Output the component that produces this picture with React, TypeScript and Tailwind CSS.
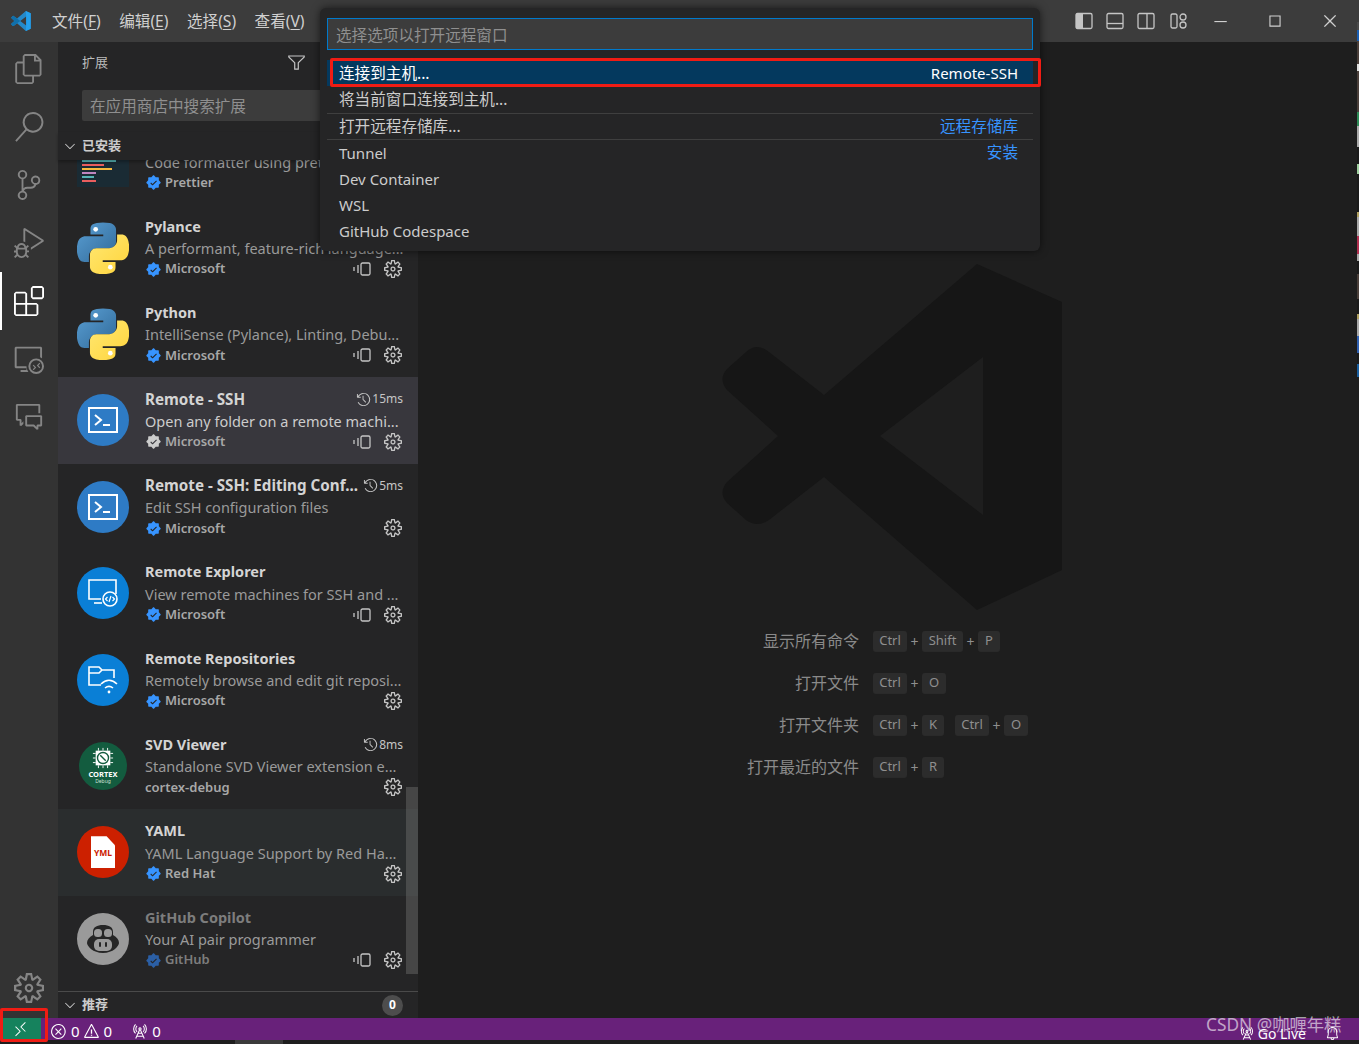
import type { ReactNode } from "react";
import {
  VscBell,
  VscChromeClose,
  VscChromeMaximize,
  VscChromeMinimize,
  VscChevronDown,
  VscCommentDiscussion,
  VscDebugAlt,
  VscError,
  VscExtensions,
  VscFiles,
  VscFilter,
  VscHistory,
  VscRadioTower,
  VscRemote,
  VscRemoteExplorer,
  VscSearch,
  VscSettingsGear,
  VscSourceControl,
  VscVerifiedFilled,
  VscWarning,
} from "react-icons/vsc";

const font = { fontFamily: '"Noto Sans", "Noto Sans CJK SC", sans-serif' };

const logoPath =
  "M255 2 L340 40 V308 L255 348 L102 215 L47 258 Q35 266 24 258 L5 241 Q-4 231 5 220 L56 174 L5 128 Q-4 117 5 107 L24 90 Q35 80 47 90 L102 133 L255 2 Z M261 95 L158 174 L261 253 Z";

function VsLogo({ className, fill }: { className: string; fill: string }) {
  return (
    <svg viewBox="0 0 341 349" className={className}>
      <path d={logoPath} fill={fill} fillRule="evenodd" />
    </svg>
  );
}

function TitleLogo() {
  return (
    <svg viewBox="0 0 341 349" className="h-[20px] w-[20px] shrink-0">
      <path d={logoPath} fill="#2489ca" fillRule="evenodd" />
      <path d="M255 2 L340 40 V308 L255 348 L261 253 V95 Z" fill="#24a0ed" />
      <path d="M5 128 L56 174 L5 220 Q-4 231 5 241 L24 258 Q35 266 47 258 L102 215 L158 174 L102 133 L47 90 Q35 80 24 90 L5 107 Q-4 117 5 128 Z" fill="#1070ab" />
    </svg>
  );
}

function PythonLogo() {
  const d =
    "M54.9 1C50.3 1 45.9 1.4 42 2.1 30.5 4.1 28.5 8.4 28.5 16.2V26.5H55.6V30H18.3C10.5 30 3.6 34.7 1.5 43.7-1 54-1.1 60.4 1.5 71.1 3.4 79.1 8 84.8 15.9 84.8H25.2V72.4C25.2 63.5 32.9 55.6 42 55.6H69.1C76.6 55.6 82.6 49.4 82.6 41.9V16.2C82.6 8.9 76.4 3.4 69.1 2.2 64.4 1.4 59.6 1 54.9 1Z";
  return (
    <svg viewBox="0 0 110 110" className="h-[52px] w-[52px]">
      <defs>
        <linearGradient id="py-blue" x1="0" y1="0" x2="1" y2="1">
          <stop offset="0" stopColor="#5a9fd4" />
          <stop offset="1" stopColor="#306998" />
        </linearGradient>
        <linearGradient id="py-yellow" x1="0" y1="0" x2="1" y2="1">
          <stop offset="0" stopColor="#ffd43b" />
          <stop offset="1" stopColor="#ffe873" />
        </linearGradient>
      </defs>
      <path d={d} fill="url(#py-blue)" />
      <circle cx="39.5" cy="15.5" r="5" fill="#fff" />
      <g transform="rotate(180 55 55.5)">
        <path d={d} fill="url(#py-yellow)" />
        <circle cx="39.5" cy="15.5" r="5" fill="#fff" />
      </g>
    </svg>
  );
}

function TerminalIcon() {
  return (
    <div className="flex h-[52px] w-[52px] items-center justify-center rounded-full bg-[#2e7bc5]">
      <svg viewBox="0 0 30 26" className="h-[26px] w-[30px]" fill="none" stroke="#fff">
        <rect x="1" y="1" width="28" height="24" strokeWidth="2" />
        <path d="M7 8l6 5-6 5" strokeWidth="2" />
        <path d="M15 18h7" strokeWidth="2" />
      </svg>
    </div>
  );
}

function ExplorerIcon() {
  return (
    <div className="flex h-[52px] w-[52px] items-center justify-center rounded-full bg-[#0a7fd6]">
      <svg viewBox="0 0 32 30" className="h-[30px] w-[32px]" fill="none" stroke="#fff" strokeWidth="1.6">
        <path d="M14 21H2V2h27v14" />
        <path d="M7 25h8" />
        <circle cx="23" cy="21" r="7" fill="#0a7fd6" />
        <path d="M20.5 19l-2 2 2 2M25.5 19l2 2-2 2M24 18l-2 6" strokeWidth="1.2" />
      </svg>
    </div>
  );
}

function ReposIcon() {
  return (
    <div className="flex h-[52px] w-[52px] items-center justify-center rounded-full bg-[#0a7fd6]">
      <svg viewBox="0 0 32 30" className="h-[30px] w-[32px]" fill="none" stroke="#fff" strokeWidth="1.6">
        <path d="M14 20H2V2h10l3 3h12v8" />
        <path d="M2 8h10l3-3" />
        <path d="M14 19c5-5 11-5 16 0M18 23c3-2.500 5-2.500 8 0" />
        <circle cx="22" cy="27" r="1.400" fill="#fff" stroke="none" />
      </svg>
    </div>
  );
}

function CortexIcon() {
  return (
    <div className="flex h-[48px] w-[48px] flex-col items-center rounded-full bg-[#135c3f] pt-[5px] text-white">
      <svg viewBox="0 0 24 24" className="h-[22px] w-[22px]" fill="none" stroke="#fff">
        <rect x="4" y="4" width="16" height="16" fill="#fff" stroke="none" />
        <circle cx="12" cy="12" r="6" stroke="#135c3f" strokeWidth="1.500" />
        <path d="M9 9l6 6" stroke="#135c3f" strokeWidth="1.500" />
        <path d="M7 1v3M12 1v3M17 1v3M7 20v3M12 20v3M17 20v3M1 7h3M1 12h3M1 17h3M20 7h3M20 12h3M20 17h3" strokeWidth="1" />
      </svg>
      <div className="mt-[1px] text-[7.500px] font-bold leading-[8px]">CORTEX</div>
      <div className="text-[5px] leading-[6px] text-[#cfe3da]">Debug</div>
    </div>
  );
}

function YamlIcon() {
  return (
    <div className="flex h-[52px] w-[52px] items-center justify-center rounded-full bg-[#cc2000]">
      <div className="flex h-[32px] w-[24px] items-center justify-center bg-white pt-[2px] [clip-path:polygon(0_0,65%_0,100%_28%,100%_100%,0_100%)]">
        <span className="text-[8.500px] font-bold text-[#cc2000]">YML</span>
      </div>
    </div>
  );
}

function CopilotIcon() {
  return (
    <div className="flex h-[52px] w-[52px] items-center justify-center rounded-full bg-[#9a9a9a]">
      <svg viewBox="0 0 36 30" className="h-[30px] w-[36px]">
        <path d="M8 8c0-5 4-7 10-7s10 2 10 7v3c4 2 6 5 6 8 0 3-6 10-16 10S2 22 2 19c0-3 2-6 6-8z" fill="#262626" />
        <rect x="9" y="5" width="8" height="8" rx="3.500" fill="#9a9a9a" />
        <rect x="19" y="5" width="8" height="8" rx="3.500" fill="#9a9a9a" />
        <rect x="9" y="15" width="18" height="12" rx="5" fill="#9a9a9a" />
        <rect x="14" y="18" width="2" height="5" rx="1" fill="#262626" />
        <rect x="20" y="18" width="2" height="5" rx="1" fill="#262626" />
      </svg>
    </div>
  );
}

function DeviceIcon() {
  return (
    <svg viewBox="0 0 18 14" className="h-[14px] w-[18px]" fill="none" stroke="#c5c5c5" strokeWidth="1.300">
      <rect x="8" y="1" width="9" height="12" rx="1.500" />
      <path d="M5 3v8M1 5v4" />
    </svg>
  );
}

type Ext = {
  name: string;
  desc: string;
  publisher: string;
  icon: ReactNode;
  time?: string;
  device?: boolean;
  verified?: boolean;
  rowClass?: string;
  dim?: boolean;
  selected?: boolean;
  wide?: boolean;
};

const extensions: Ext[] = [
  {
    name: "Prettier - Code formatter",
    desc: "Code formatter using prettier",
    publisher: "Prettier",
    icon: (
      <div className="flex h-[52px] w-[52px] flex-col justify-end gap-[2px] bg-[#1a2b34] px-[5px] pb-[5px]">
        <div className="h-[2px] w-[34px] bg-[#56b3b4]" />
        <div className="h-[2px] w-[22px] bg-[#ea5e5e]" />
        <div className="h-[2px] w-[30px] bg-[#f7b93e]" />
        <div className="h-[2px] w-[14px] bg-[#bf85bf]" />
        <div className="h-[2px] w-[12px] bg-[#56b3b4]" />
        <div className="h-[2px] w-[14px] bg-[#ea5e5e]" />
      </div>
    ),
    verified: true,
  },
  { name: "Pylance", desc: "A performant, feature-rich language...", publisher: "Microsoft", icon: <PythonLogo />, device: true, verified: true },
  { name: "Python", desc: "IntelliSense (Pylance), Linting, Debu...", publisher: "Microsoft", icon: <PythonLogo />, device: true, verified: true },
  { name: "Remote - SSH", desc: "Open any folder on a remote machi...", publisher: "Microsoft", icon: <TerminalIcon />, time: "15ms", device: true, verified: true, rowClass: "bg-[#38373d]", selected: true, wide: true },
  { name: "Remote - SSH: Editing Conf...", desc: "Edit SSH configuration files", publisher: "Microsoft", icon: <TerminalIcon />, time: "5ms", verified: true, wide: true },
  { name: "Remote Explorer", desc: "View remote machines for SSH and ...", publisher: "Microsoft", icon: <ExplorerIcon />, device: true, verified: true },
  { name: "Remote Repositories", desc: "Remotely browse and edit git reposi...", publisher: "Microsoft", icon: <ReposIcon />, verified: true },
  { name: "SVD Viewer", desc: "Standalone SVD Viewer extension e...", publisher: "cortex-debug", icon: <CortexIcon />, time: "8ms" },
  { name: "YAML", desc: "YAML Language Support by Red Ha...", publisher: "Red Hat", icon: <YamlIcon />, verified: true, rowClass: "bg-[#2a2d2e]" },
  { name: "GitHub Copilot", desc: "Your AI pair programmer", publisher: "GitHub", icon: <CopilotIcon />, device: true, verified: true, dim: true },
];

function ExtensionRow({ ext }: { ext: Ext }) {
  return (
    <div className={`flex h-[86.4px] items-center pl-[19px] pr-[15px] ${ext.rowClass ?? ""}`}>
      <div className="flex w-[52px] shrink-0 justify-center">{ext.icon}</div>
      <div className="ml-[16px] flex min-w-0 flex-1 flex-col">
        <div className="flex h-[21px] items-center justify-between whitespace-nowrap">
          <span className={`font-bold ${ext.wide ? "text-[15.2px]" : "text-[14.5px]"} ${ext.dim ? "text-[#7d7d7d]" : "text-[#d4d4d4]"}`}>{ext.name}</span>
          {ext.time && (
            <span className="flex items-center gap-[1px] text-[12px] text-[#c5c5c5]">
              <VscHistory className="h-[15px] w-[15px]" />
              {ext.time}
            </span>
          )}
        </div>
        <div className={`h-[22px] whitespace-nowrap text-[14.5px] leading-[22px] ${ext.selected ? "text-[#cccccc]" : "text-[#9a9a9a]"}`}>{ext.desc}</div>
        <div className="flex h-[20px] items-center justify-between">
          <span className="flex items-center gap-[3px]">
            {ext.verified && (
              <VscVerifiedFilled className={`h-[17px] w-[17px] ${ext.selected ? "text-[#cccccc]" : ext.dim ? "text-[#2b5fa5]" : "text-[#3794ff]"}`} />
            )}
            <span className={`text-[13px] font-semibold ${ext.dim ? "text-[#7d7d7d]" : "text-[#a8a8a8]"}`}>{ext.publisher}</span>
          </span>
          <span className="mr-[1px] flex items-center gap-[13px]">
            {ext.device && <DeviceIcon />}
            <VscSettingsGear className="h-[18px] w-[18px] text-[#c5c5c5]" />
          </span>
        </div>
      </div>
    </div>
  );
}

function MenuItem({ label, hot }: { label: string; hot: string }) {
  return (
    <span className="whitespace-nowrap">
      {label}(<span className="underline underline-offset-2">{hot}</span>)
    </span>
  );
}

function ActivityIcon({ children, active }: { children: ReactNode; active?: boolean }) {
  return (
    <div className={`flex h-[58px] w-full items-center justify-center border-l-2 pr-[2px] ${active ? "border-white text-white" : "border-transparent text-[#858585]"}`}>
      {children}
    </div>
  );
}

function keyWidth(k: string) {
  if (k === "Shift") return "min-w-[41px]";
  if (k === "Ctrl") return "min-w-[34px]";
  if (k === "O") return "min-w-[24px]";
  return "min-w-[22px]";
}

function Key({ label }: { label: string }) {
  return (
    <span className={`flex h-[21px] items-center justify-center rounded-[3px] border-b border-b-[#2a2a2a] bg-[#2c2c2c] text-[13px] text-[#8f8f8f] ${keyWidth(label)}`}>
      {label}
    </span>
  );
}

function Combo({ keys }: { keys: string[] }) {
  return (
    <span className="flex items-center">
      {keys.map((k, i) => (
        <span key={k} className="flex items-center">
          {i > 0 && <span className="w-[15px] text-center text-[14px] text-[#8f8f8f]">+</span>}
          <Key label={k} />
        </span>
      ))}
    </span>
  );
}

const shortcuts = [
  { label: "显示所有命令", combos: [["Ctrl", "Shift", "P"]] },
  { label: "打开文件", combos: [["Ctrl", "O"]] },
  { label: "打开文件夹", combos: [["Ctrl", "K"], ["Ctrl", "O"]] },
  { label: "打开最近的文件", combos: [["Ctrl", "R"]] },
];

function LayoutIcon({ kind }: { kind: "left" | "bottom" | "split" | "grid" }) {
  return (
    <svg viewBox="0 0 18 18" className={`h-[18px] w-[18px] ${kind === "grid" ? "ml-[2px]" : ""}`} fill="none" stroke="#c5c5c5" strokeWidth="1.300">
      {kind === "grid" ? (
        <>
          <rect x="1" y="2" width="6" height="14" rx="1.500" />
          <circle cx="13" cy="5" r="3" />
          <circle cx="13" cy="13" r="3" />
        </>
      ) : (
        <>
          <rect x="1" y="1.500" width="16" height="15" rx="1.500" />
          {kind === "left" && <rect x="1" y="1.500" width="7" height="15" fill="#c5c5c5" stroke="none" />}
          {kind === "bottom" && <path d="M1 11.500h16" />}
          {kind === "split" && <path d="M10 1.500v15" />}
        </>
      )}
    </svg>
  );
}

function PickRow({ label, link, border, className }: { label: string; link?: string; border?: boolean; className: string }) {
  return (
    <div className={`mx-[7px] flex items-center justify-between pl-[12px] pr-[15px] text-[#cccccc] ${className} ${border ? "border-b border-[#3f3f3f]" : ""}`}>
      <span>{label}</span>
      {link && <span className="text-[15.6px] text-[#3794ff]">{link}</span>}
    </div>
  );
}

// bits of another window showing past the right edge of the capture
const edgeStrip = [
  { h: 8, c: "#4a4a4a" }, { h: 11, c: "#1a5fb4" }, { h: 23, c: "#4a3f3a" }, { h: 7, c: "#e0e0e0" },
  { h: 41, c: "#4a3f3a" }, { h: 14, c: "#2e8b57" }, { h: 21, c: "#aaaaaa" }, { h: 17, c: "#1a1a1a" },
  { h: 10, c: "#a0d0a0" }, { h: 38, c: "#1a1a1a" }, { h: 5, c: "#b0a060" }, { h: 19, c: "#a8a8a8" },
  { h: 18, c: "#b03050" }, { h: 7, c: "#a8a8a8" }, { h: 13, c: "#1a1a1a" }, { h: 25, c: "#4a3f3a" },
  { h: 15, c: "#1a1a1a" }, { h: 5, c: "#b0a060" }, { h: 17, c: "#a8a8a8" }, { h: 17, c: "#3060b0" },
  { h: 11, c: "#1a1a1a" }, { h: 13, c: "#1a5fa0" },
];

export default function App() {
  return (
    <div style={font} className="relative flex h-[1044px] w-[1359px] flex-col overflow-hidden bg-[#1e1e1e] text-[#cccccc]">
      <header className="flex h-[42px] shrink-0 items-center bg-[#3c3c3c] pl-[11px]">
        <TitleLogo />
        <nav className="ml-[21px] flex gap-[18.5px] pt-[1px] text-[15.6px] text-[#d0d0d0]">
          <MenuItem label="文件" hot="F" />
          <MenuItem label="编辑" hot="E" />
          <MenuItem label="选择" hot="S" />
          <MenuItem label="查看" hot="V" />
        </nav>
        <div className="ml-auto flex items-center gap-[13px]">
          <LayoutIcon kind="left" />
          <LayoutIcon kind="bottom" />
          <LayoutIcon kind="split" />
          <LayoutIcon kind="grid" />
        </div>
        <div className="ml-[4px] mr-[2px] flex items-center text-[#d0d0d0]">
          <span className="flex w-[55px] justify-center"><VscChromeMinimize className="h-[18px] w-[18px]" /></span>
          <span className="flex w-[55px] justify-center"><VscChromeMaximize className="h-[18px] w-[18px]" /></span>
          <span className="flex w-[55px] justify-center"><VscChromeClose className="h-[18px] w-[18px]" /></span>
        </div>
      </header>

      <div className="flex min-h-0 flex-1">
        <aside className="flex w-[58px] shrink-0 flex-col bg-[#333333] pb-[1px]">
          <div className="-mt-[2px]">
            <ActivityIcon><VscFiles className="h-[30px] w-[30px]" /></ActivityIcon>
          </div>
          <ActivityIcon><VscSearch className="h-[30px] w-[30px]" /></ActivityIcon>
          <ActivityIcon><VscSourceControl className="h-[30px] w-[30px]" /></ActivityIcon>
          <ActivityIcon><VscDebugAlt className="h-[30px] w-[30px]" /></ActivityIcon>
          <ActivityIcon active><VscExtensions className="h-[30px] w-[30px]" /></ActivityIcon>
          <ActivityIcon><VscRemoteExplorer className="h-[30px] w-[30px]" /></ActivityIcon>
          <ActivityIcon><VscCommentDiscussion className="h-[30px] w-[30px]" /></ActivityIcon>
          <div className="mt-auto">
            <ActivityIcon><VscSettingsGear className="h-[30px] w-[30px]" /></ActivityIcon>
          </div>
        </aside>

        <section className="relative flex w-[360px] shrink-0 flex-col bg-[#252526]">
          <div className="flex h-[42px] shrink-0 items-center justify-between pl-[24px] pr-[112px]">
            <span className="text-[13px] text-[#bbbbbb]">扩展</span>
          </div>
          <div className="absolute left-[229px] top-[11px]"><VscFilter className="h-[19px] w-[19px] text-[#c5c5c5]" /></div>
          <div className="shrink-0 pl-[24px] pr-[16px] pt-[6px]">
            <div className="flex h-[31px] items-center rounded-[2px] bg-[#3c3c3c] pl-[8px] pt-[2px] text-[15.6px] text-[#8f8f8f]">在应用商店中搜索扩展</div>
          </div>
          <div className="z-10 mt-[11px] flex h-[28px] shrink-0 items-center bg-[#252526] pl-[4px] shadow-[0_2px_3px_#0000004d]">
            <VscChevronDown className="h-[16px] w-[16px]" />
            <span className="ml-[4px] text-[13px] font-bold text-[#cccccc]">已安装</span>
          </div>
          <div className="relative min-h-0 flex-1 overflow-hidden">
            <div className="-mt-[42px]">
              {extensions.map((ext) => (
                <ExtensionRow key={ext.name} ext={ext} />
              ))}
            </div>
            <div className="absolute right-0 top-[627px] h-[187px] w-[12px] bg-[#79797966]" />
          </div>
          <div className="flex h-[27px] shrink-0 items-center justify-between border-t border-[#4a4a4a] pl-[4px] pr-[15px]">
            <span className="flex items-center">
              <VscChevronDown className="h-[16px] w-[16px]" />
              <span className="ml-[4px] text-[13px] font-bold text-[#cccccc]">推荐</span>
            </span>
            <span className="flex h-[21px] w-[21px] items-center justify-center rounded-full bg-[#4d4d4d] text-[12px] font-bold text-white">0</span>
          </div>
        </section>

        <main className="min-w-0 flex-1">
          <div className="pl-[304px] pt-[220px]">
            <VsLogo className="h-[349px] w-[341px]" fill="#161616" />
          </div>
          <div className="mt-[20px] flex flex-col gap-[21px]">
            {shortcuts.map((s) => (
              <div key={s.label} className="flex h-[21px] items-center">
                <span className="w-[441px] pb-[1px] text-right text-[16px] text-[#8a8a8a]">{s.label}</span>
                <span className="ml-[14px] flex gap-[11px]">
                  {s.combos.map((c, i) => (
                    <Combo key={i} keys={c} />
                  ))}
                </span>
              </div>
            ))}
          </div>
        </main>
      </div>

      <footer className="flex h-[22px] shrink-0 items-center bg-[#68217a] pt-[4px] text-[15px] text-white">
        <span className="-mt-[4px] flex h-[22px] w-[41px] items-center justify-center bg-[#16825d]"><VscRemote className="h-[17px] w-[17px]" /></span>
        <span className="ml-[9px] flex items-center gap-[4px]"><VscError className="h-[17px] w-[17px]" />0</span>
        <span className="ml-[3px] flex items-center gap-[4px]"><VscWarning className="h-[17px] w-[17px]" />0</span>
        <span className="ml-[19px] flex items-center gap-[4px]"><VscRadioTower className="h-[17px] w-[17px]" />0</span>
        <span className="ml-auto flex items-center gap-[4px] pt-[4px] text-[14px]">
          <VscRadioTower className="h-[15px] w-[15px]" />Go Live
        </span>
        <span className="ml-[19px] mr-[19px] pt-[4px]"><VscBell className="h-[15px] w-[15px]" /></span>
      </footer>
      <div className="h-[4px] shrink-0 pl-[235px]">
        <div className="h-full w-[48px] bg-[#3a3a3a]" />
      </div>

      {/* quick pick */}
      <div className="absolute left-[320px] top-[8px] z-20 h-[243px] w-[720px] rounded-[6px] bg-[#252526] shadow-[0_0_8px_#00000099]">
        <div className="mx-[7px] mt-[10px] flex h-[32px] items-center border border-[#007acc] bg-[#3c3c3c] pl-[8px] pt-[3px] text-[15.6px] text-[#8f8f8f]">
          选择选项以打开远程窗口
        </div>
        <div className="mx-[7px] mt-[10px] flex h-[26px] items-center justify-between bg-[#04395e] pl-[12px] pr-[15px] pt-[1px] text-[15.6px] text-white">
          <span>连接到主机...</span>
          <span className="text-[15px]">Remote-SSH</span>
        </div>
        <PickRow label="将当前窗口连接到主机..." border className="h-[28px] text-[15.6px]" />
        <PickRow label="打开远程存储库..." link="远程存储库" border className="h-[26px] pt-[1px] text-[15.6px]" />
        <PickRow label="Tunnel" link="安装" className="h-[26px] text-[15px]" />
        <PickRow label="Dev Container" className="h-[26px] text-[15px]" />
        <PickRow label="WSL" className="h-[26px] text-[15px]" />
        <PickRow label="GitHub Codespace" className="h-[26px] text-[15px]" />
      </div>

      {/* red annotations */}
      <div className="pointer-events-none absolute left-[330px] top-[58px] z-20 h-[29px] w-[711px] rounded-[2px] border-[3px] border-[#f01c14]" />
      <div className="pointer-events-none absolute left-0 top-[1008px] z-20 h-[34px] w-[48px] rounded-[2px] border-[3px] border-[#f01c14]" />

      {/* csdn mark */}
      <div className="pointer-events-none absolute left-[1206px] top-[1012px] z-20 whitespace-nowrap text-[17.3px] text-[#ffffff99]">CSDN @咖喱年糕</div>

      <div className="absolute right-0 top-[22px] z-20 flex w-[2px] flex-col">
        {edgeStrip.map((s, i) => (
          <div key={i} style={{ height: s.h, background: s.c }} />
        ))}
      </div>
    </div>
  );
}
